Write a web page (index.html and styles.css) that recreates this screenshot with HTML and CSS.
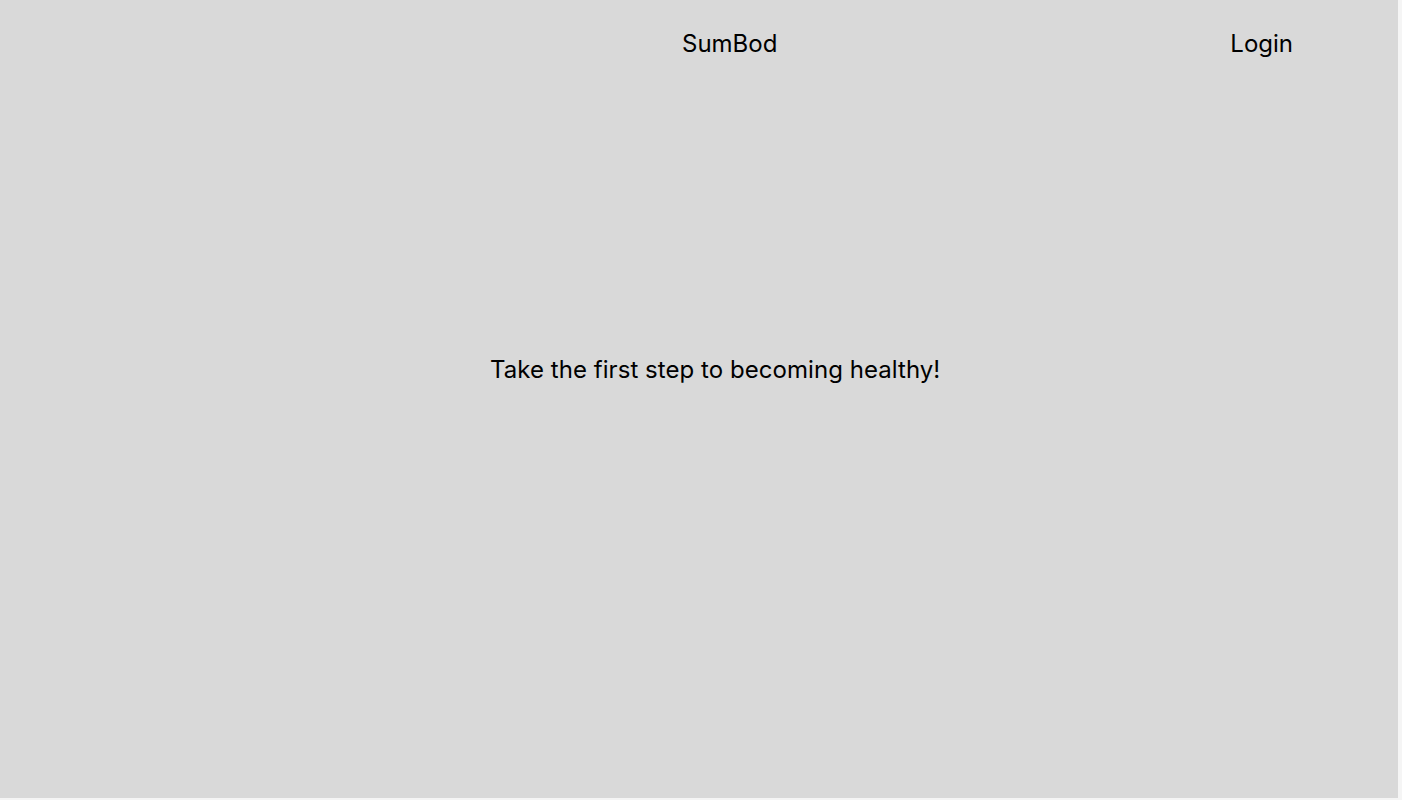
FILE: index.html
```html
<!DOCTYPE html>
<html>
<head>
<meta charset="utf-8">
<link rel="stylesheet" href="styles.css">
</head>
<body>
<div class="page">
  <header class="header">
    <div class="brand">SumBod</div>
    <div class="login">Login</div>
  </header>
  <main class="hero">
    <p class="tagline">Take the first step to becoming healthy!</p>
  </main>
</div>
</body>
</html>
```
FILE: styles.css
```css
html, body {
  margin: 0;
  padding: 0;
  background: #f5f5f5;
}
.page {
  width: 1398px;
  height: 798px;
  background: #d9d9d9;
  font-family: Inter, "Noto Sans", sans-serif;
  color: #000;
  display: flex;
  flex-direction: column;
}
.header {
  display: flex;
  justify-content: space-between;
  align-items: flex-start;
  height: 59px;
  padding: 29px 105px 0 682px;
  font-size: 24px;
  line-height: 30px;
}
.brand,
.login {
  white-space: nowrap;
}
.hero {
  padding-left: 490px;
  padding-top: 267px;
}
.tagline {
  margin: 0;
  font-size: 24px;
  line-height: 30px;
  letter-spacing: 0.05px;
}
```
